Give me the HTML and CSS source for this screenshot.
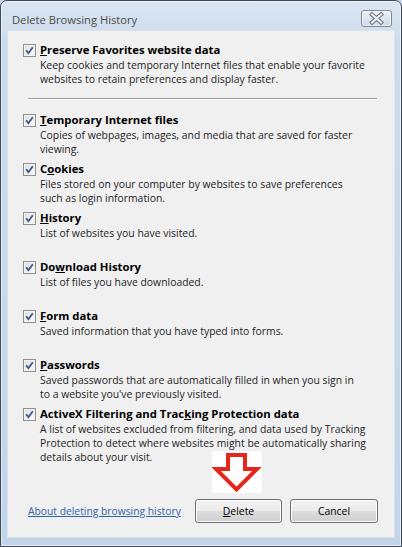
FILE: index.html
```html
<!DOCTYPE html>
<html lang="en">
<head>
    <meta charset="UTF-8">
    <meta name="viewport" content="width=device-width, initial-scale=1.0">
    <title>Delete Browsing History</title>
    <link rel="stylesheet" href="styles.css">
</head>
<body>
    <div class="window">
        <div class="titlebar">
            <span class="title">Delete Browsing History</span>
            <button class="close-btn" aria-label="Close">
                <svg width="29" height="15" viewBox="0 0 29 15">
                    <path d="M10 3.5 L19 11.5 M19 3.5 L10 11.5" stroke="#6b7685" stroke-width="4.2" stroke-linecap="square"/>
                    <path d="M10 3.5 L19 11.5 M19 3.5 L10 11.5" stroke="#f3f5f8" stroke-width="2" stroke-linecap="square"/>
                </svg>
            </button>
        </div>

        <div class="client">
            <div class="options">
                <div class="option">
                    <span class="check"></span>
                    <div class="option-text">
                        <div class="option-label"><u>P</u>reserve Favorites website data</div>
                        <div class="option-desc">Keep cookies and temporary Internet files that enable your favorite<br>websites to retain preferences and display faster.</div>
                    </div>
                </div>

                <div class="separator"></div>

                <div class="option">
                    <span class="check"></span>
                    <div class="option-text">
                        <div class="option-label"><u>T</u>emporary Internet files</div>
                        <div class="option-desc">Copies of webpages, images, and media that are saved for faster<br>viewing.</div>
                    </div>
                </div>

                <div class="option">
                    <span class="check"></span>
                    <div class="option-text">
                        <div class="option-label">C<u>o</u>okies</div>
                        <div class="option-desc">Files stored on your computer by websites to save preferences<br>such as login information.</div>
                    </div>
                </div>

                <div class="option">
                    <span class="check"></span>
                    <div class="option-text">
                        <div class="option-label"><u>H</u>istory</div>
                        <div class="option-desc">List of websites you have visited.</div>
                    </div>
                </div>

                <div class="option">
                    <span class="check"></span>
                    <div class="option-text">
                        <div class="option-label">Do<u>w</u>nload History</div>
                        <div class="option-desc">List of files you have downloaded.</div>
                    </div>
                </div>

                <div class="option">
                    <span class="check"></span>
                    <div class="option-text">
                        <div class="option-label"><u>F</u>orm data</div>
                        <div class="option-desc">Saved information that you have typed into forms.</div>
                    </div>
                </div>

                <div class="option">
                    <span class="check"></span>
                    <div class="option-text">
                        <div class="option-label"><u>P</u>asswords</div>
                        <div class="option-desc">Saved passwords that are automatically filled in when you sign in<br>to a website you've previously visited.</div>
                    </div>
                </div>

                <div class="option">
                    <span class="check"></span>
                    <div class="option-text">
                        <div class="option-label">ActiveX Filtering and Trac<u>k</u>ing Protection data</div>
                        <div class="option-desc">A list of websites excluded from filtering, and data used by Tracking<br>Protection to detect where websites might be automatically sharing<br>details about your visit.</div>
                    </div>
                </div>
            </div>

            <!-- red arrow pointing at the Delete button -->
            <div class="pointer">
                <svg width="50" height="42" viewBox="0 0 50 42">
                    <polygon points="16,4 33,4 33,18 45,18 24.5,38.5 4,18 16,18" fill="#fff" stroke="#e5261d" stroke-width="4" stroke-linejoin="miter"/>
                </svg>
            </div>

            <div class="footer">
                <a href="#" class="help-link">About deleting browsing history</a>
                <div class="buttons">
                    <button class="btn"><u>D</u>elete</button>
                    <button class="btn btn-cancel">Cancel</button>
                </div>
            </div>
        </div>
    </div>
</body>
</html>
```
FILE: styles.css
```css
body {
    margin: 0;
    font-family: "Open Sans", "Noto Sans", sans-serif;
    background-color: #c4d5e9;
}
.window {
    box-sizing: border-box;
    width: 402px;
    height: 547px;
    border: 1px solid #3e4856;
    border-radius: 7px 7px 0 0;
    background: linear-gradient(180deg, #dae5f2 0, #cddcec 40px, #c2d4e8 100%);
    box-shadow: inset 0 0 0 1px rgba(255, 255, 255, 0.55);
    padding: 0 7px 9px 7px;
    display: flex;
    flex-direction: column;
}
.titlebar {
    height: 30px;
    display: flex;
    align-items: flex-start;
    justify-content: space-between;
}
.title {
    padding: 11px 0 0 4px;
    font-size: 11.2px;
    line-height: 15px;
    color: #4a4a4a;
}
.close-btn {
    box-sizing: border-box;
    width: 31px;
    height: 17px;
    margin: 9px 2px 0 0;
    padding: 0;
    border: 1px solid #7d8898;
    border-radius: 3px;
    background: linear-gradient(180deg, #eef2f7 0%, #dde5ef 50%, #d0dbe8 100%);
    box-shadow: inset 0 0 0 1px rgba(255, 255, 255, 0.6);
    display: flex;
    align-items: center;
    justify-content: center;
}
.close-btn svg {
    display: block;
}
.client {
    flex: 1;
    position: relative;
    background-color: #f0f0f0;
    box-shadow: 0 0 0 1px #d9e3ef;
    display: flex;
    flex-direction: column;
}
.options {
    padding: 11px 15px 0 15px;
}
.option {
    height: 49px;
    display: flex;
    align-items: flex-start;
}
.check {
    box-sizing: border-box;
    flex: none;
    width: 13px;
    height: 13px;
    margin-top: 2px;
    margin-right: 4px;
    border: 1px solid #8e8f8f;
    background:
        url("data:image/svg+xml;utf8,<svg xmlns='http://www.w3.org/2000/svg' width='11' height='11'><path d='M2.2 5.2 L4.4 8.2 L8.8 2.2' fill='none' stroke='%233f5a8e' stroke-width='1.9'/></svg>") center no-repeat,
        linear-gradient(135deg, #d9d9d9 0%, #f2f2f2 60%, #fbfbfb 100%);
    box-shadow: inset 0 0 0 1px #f4f4f4;
}
.option-text {
    min-width: 0;
}
.option-label {
    font-size: 11.3px;
    font-weight: bold;
    line-height: 15px;
    color: #000;
}
.option-desc {
    margin-top: 1px;
    font-size: 10.4px;
    line-height: 14px;
    color: #1e1e1e;
    white-space: nowrap;
}
.separator {
    height: 1px;
    margin: 7px 2px 12px 5px;
    background-color: #a0a0a0;
    border-bottom: 1px solid #fff;
}
.pointer {
    position: absolute;
    left: 204px;
    top: 420px;
    width: 50px;
    height: 42px;
    background-color: #fff;
}
.pointer svg {
    display: block;
}
.footer {
    margin-top: auto;
    padding: 0 16px 14px 20px;
    display: flex;
    align-items: center;
}
.help-link {
    font-size: 10.3px;
    color: #2f65a8;
    text-decoration: underline;
}
.buttons {
    margin-left: auto;
    display: flex;
    gap: 8px;
}
.btn {
    box-sizing: border-box;
    width: 87px;
    height: 24px;
    padding: 0;
    border: 1px solid #707070;
    border-radius: 3px;
    background: linear-gradient(180deg, #f2f2f2 0%, #ebebeb 50%, #dddddd 51%, #cfcfcf 100%);
    box-shadow: inset 0 0 0 1px #fbfbfb;
    font-family: "Open Sans", "Noto Sans", sans-serif;
    font-size: 10.4px;
    color: #000;
}
.btn-cancel {
    width: 88px;
}
```
